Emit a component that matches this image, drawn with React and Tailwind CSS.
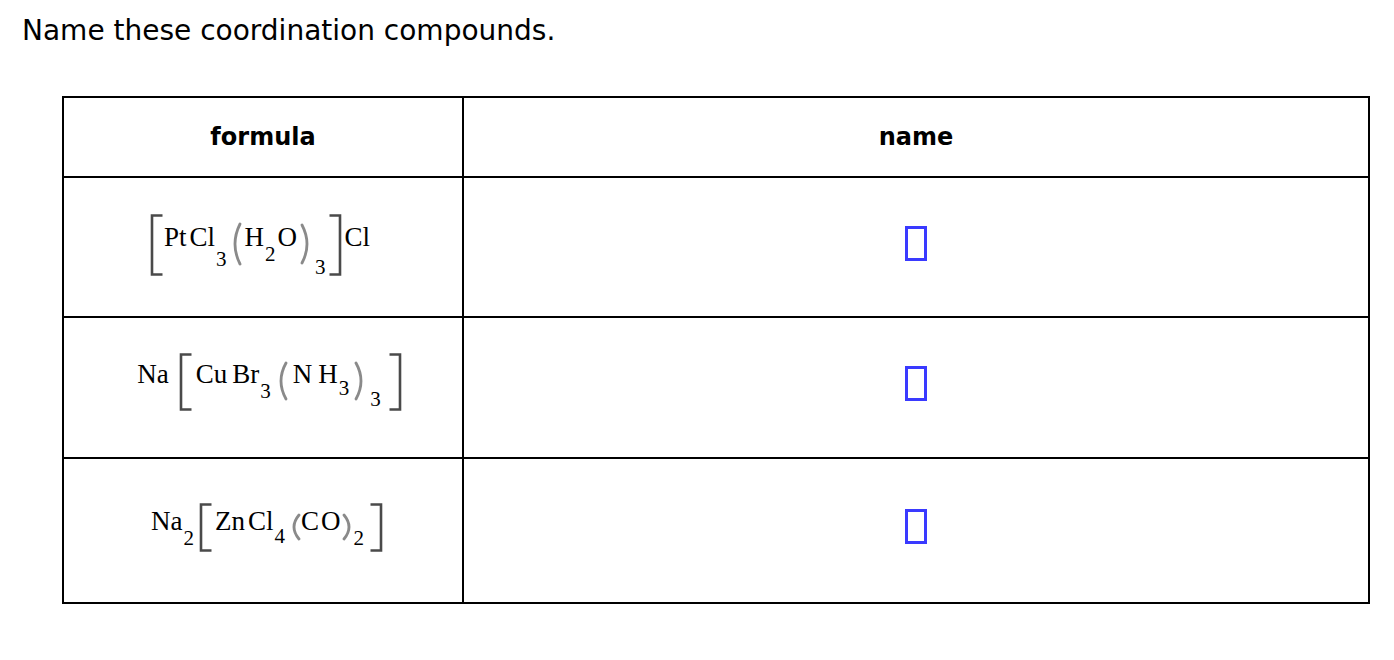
import React from "react";

const serif = { fontFamily: '"Liberation Serif", "Times New Roman", serif' };

// brackets and parentheses are inline svgs; vertical-align drops them below the text baseline
function LBracket({ h, className = "" }) {
  return (
    <svg width="13" height={h} viewBox={`0 0 13 ${h}`} className={`inline-block ${className}`}>
      <path d={`M12.5 1.5 H2 V${h - 1.5} H12.5`} fill="none" stroke="#4a4a4a" strokeWidth="2.6" />
    </svg>
  );
}

function RBracket({ h, className = "" }) {
  return (
    <svg width="13" height={h} viewBox={`0 0 13 ${h}`} className={`inline-block ${className}`}>
      <path d={`M0.5 1.5 H11 V${h - 1.5} H0.5`} fill="none" stroke="#4a4a4a" strokeWidth="2.6" />
    </svg>
  );
}

function Paren({ side, h, className = "" }) {
  const d =
    side === "l"
      ? `M10 2 Q0 ${h / 2} 10 ${h - 2}`
      : `M2 2 Q12 ${h / 2} 2 ${h - 2}`;
  return (
    <svg width="12" height={h} viewBox={`0 0 12 ${h}`} className={`inline-block ${className}`}>
      <path d={d} fill="none" stroke="#8a8a8a" strokeWidth="2.8" strokeLinecap="round" />
    </svg>
  );
}

function S({ children, className = "" }) {
  return <sub className={`static text-[21px] leading-none ${className}`}>{children}</sub>;
}

function Formula({ children, className = "" }) {
  return (
    <div className={`whitespace-nowrap text-center text-[27px] leading-none text-black ${className}`} style={serif}>
      {children}
    </div>
  );
}

function AnswerBox() {
  return <div className="h-[35px] w-[22px] border-[3px] border-[#3a3aff]" />;
}

const formulas = [
  <Formula key="1" className="pb-[2px] pr-[6px]">
    <LBracket h={62} className="mr-[1px] align-[-30px]" />
    Pt<span className="ml-[3px]">Cl</span>
    <S className="ml-[1px] align-[-20px]">3</S>
    <Paren side="l" h={44} className="mx-[3px] align-[-20px]" />
    H<S className="ml-[1px] align-[-15px]">2</S>
    <span className="ml-[2px]">O</span>
    <Paren side="r" h={42} className="ml-[3px] align-[-19px]" />
    <S className="ml-[3px] align-[-28px]">3</S>
    <RBracket h={62} className="mx-[3px] align-[-30px]" />
    Cl
  </Formula>,
  <Formula key="2" className="pb-[11px] pl-[13px]">
    Na
    <LBracket h={58} className="ml-[10px] mr-[4px] align-[-28px]" />
    Cu<span className="ml-[5px]">Br</span>
    <S className="ml-[1px] align-[-15px]">3</S>
    <Paren side="l" h={40} className="mx-[5px] align-[-18px]" />
    N<span className="ml-[6px]">H</span>
    <S className="ml-[1px] align-[-12px]">3</S>
    <Paren side="r" h={40} className="ml-[5px] align-[-18px]" />
    <S className="ml-[4px] align-[-23px]">3</S>
    <RBracket h={58} className="ml-[8px] align-[-28px]" />
  </Formula>,
  <Formula key="3" className="pb-[6px] pl-[8px]">
    Na<S className="ml-[1px] align-[-15px]">2</S>
    <LBracket h={49} className="ml-[5px] mr-[3px] align-[-22px]" />
    Zn<span className="ml-[3px]">Cl</span>
    <S className="ml-[1px] align-[-13px]">4</S>
    <Paren side="l" h={28} className="ml-[4px] align-[-11px]" />
    C<span className="ml-[2px]">O</span>
    <Paren side="r" h={28} className="ml-[1px] align-[-11px]" />
    <S className="align-[-15px]">2</S>
    <RBracket h={49} className="ml-[6px] align-[-22px]" />
  </Formula>,
];

export default function App() {
  const sans = { fontFamily: '"DejaVu Sans", Verdana, sans-serif' };
  const heights = ["h-[140px]", "h-[141px]", "h-[145px]"];

  return (
    <div className="min-h-screen bg-white pl-[22px] pt-[14px] text-black" style={sans}>
      <h1 className="text-[28px] font-normal leading-[34px]">Name these coordination compounds.</h1>
      <table className="ml-[40px] mt-[48px] w-[1308px] border-collapse border-2 border-black">
        <thead>
          <tr className="h-[80px]">
            <th className="w-[400px] border-2 border-black text-center text-[24px] font-bold">formula</th>
            <th className="border-2 border-black text-center text-[24px] font-bold">name</th>
          </tr>
        </thead>
        <tbody>
          {formulas.map((f, i) => (
            <tr key={i} className={heights[i]}>
              <td className="border-2 border-black align-middle">{f}</td>
              <td className="border-2 border-black align-middle">
                <div className="flex justify-center pb-[8px]">
                  <AnswerBox />
                </div>
              </td>
            </tr>
          ))}
        </tbody>
      </table>
    </div>
  );
}
